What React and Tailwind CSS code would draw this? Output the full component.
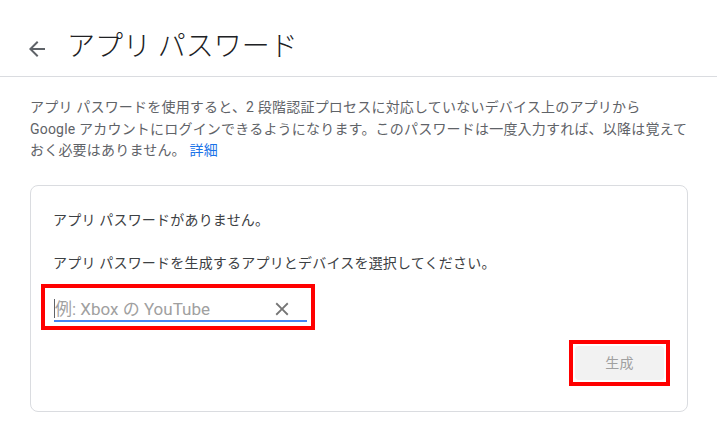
import React from 'react'

const font = { fontFamily: 'Roboto, "Noto Sans CJK JP", sans-serif' }

function ArrowBack() {
	return (
		<svg width="24" height="24" viewBox="0 0 24 24" className="mt-1 shrink-0" fill="#5f6368">
			<path d="M20 11H7.83l5.59-5.59L12 4l-8 8 8 8 1.41-1.41L7.83 13H20v-2z" />
		</svg>
	)
}

function CloseIcon() {
	return (
		<svg width="22" height="22" viewBox="0 0 24 24" fill="#757575" className="shrink-0">
			<path d="M19 6.41L17.59 5 12 10.59 6.41 5 5 6.41 10.59 12 5 17.59 6.41 19 12 13.41 17.59 19 19 17.59 13.41 12z" />
		</svg>
	)
}

export default function App() {
	return (
		<div className="w-[717px] h-[441px] bg-white overflow-hidden" style={font}>
			{/* header */}
			<div className="h-[77px] border-b border-[#dadce0] flex items-center pt-[18px] pl-[25px]">
				<ArrowBack />
				<h1 className="ml-[18px] text-[28px] leading-[36px] text-[#202124] font-light">アプリ パスワード</h1>
			</div>

			<p className="pt-[20px] px-[30px] text-[14px] leading-[21.5px] tracking-[0.2px] text-[#5f6368] whitespace-nowrap">
				アプリ パスワードを使用すると、2 段階認証プロセスに対応していないデバイス上のアプリから<br />
				Google アカウントにログインできるようになります。このパスワードは一度入力すれば、以降は覚えて<br />
				おく必要はありません。 <a href="#" className="text-[#1a73e8]">詳細</a>
			</p>

			<div className="ml-[30px] mt-[23px] w-[658px] h-[227px] border border-[#dadce0] rounded-lg pt-[24px] pl-[22px] pr-[17px] pb-[25px] text-[14px] leading-[20px] tracking-[0.2px] text-[#3c4043]">
				<div>アプリ パスワードがありません。</div>
				<div className="mt-[23px]">アプリ パスワードを生成するアプリとデバイスを選択してください。</div>

				{/* input, outlined in red */}
				<div className="-ml-3 mt-[11px] w-[274px] h-[46px] border-4 border-[#ff0000] pl-[9px] pr-[4px] pb-[4px]">
					<div className="h-[34px] border-b-2 border-[#4285f4] flex items-end pb-[1px]">
						<span className="w-px h-[19px] bg-[#5f6368] mb-[1px]" />
						<span className="flex-1 text-[17px] leading-[20px] tracking-normal text-[#a0a0a0]">例: Xbox の YouTube</span>
						<span className="mr-[14px] mb-[-1px]">
							<CloseIcon />
						</span>
					</div>
				</div>

				{/* button, outlined in red */}
				<div className="mt-[10px] flex justify-end">
					<div className="w-[101px] h-[46px] border-4 border-[#ff0000] p-[2px]">
						<button className="w-full h-full rounded bg-[#f2f2f2] text-[14px] text-[#a0a0a0]">生成</button>
					</div>
				</div>
			</div>
		</div>
	)
}
